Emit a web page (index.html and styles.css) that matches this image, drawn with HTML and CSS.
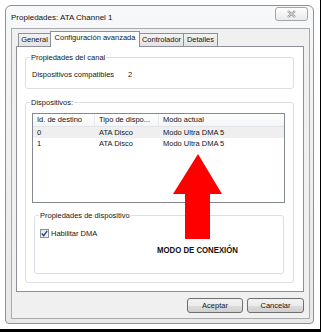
FILE: index.html
```html
<!DOCTYPE html>
<html lang="es">
  <head>
    <meta charset="UTF-8" />
    <meta name="viewport" content="width=device-width, initial-scale=1.0" />
    <title>Propiedades: ATA Channel 1</title>
    <link rel="stylesheet" href="styles.css">
  </head>
  <body>
    <div class="screen">
      <div class="window">
        <div class="titlebar">
          <span class="title">Propiedades: ATA Channel 1</span>
          <button class="close-btn">
            <svg width="9" height="8" viewBox="0 0 9 8">
              <path d="M1 1 L8 7 M8 1 L1 7" stroke="#8c8c8c" stroke-width="2.2" />
              <path d="M1 1 L8 7 M8 1 L1 7" stroke="#f4f4f4" stroke-width="0.8" />
            </svg>
          </button>
        </div>
        <div class="client">
          <div class="tabs">
            <div class="tab tab-general">General</div>
            <div class="tab tab-config active">Configuración avanzada</div>
            <div class="tab tab-ctrl">Controlador</div>
            <div class="tab tab-details">Detalles</div>
          </div>
          <div class="panel">
            <div class="group group-channel">
              <div class="group-title">Propiedades del canal</div>
              <div class="prop-row">
                <span class="prop-name">Dispositivos compatibles</span>
                <span>2</span>
              </div>
            </div>
            <div class="group group-devices">
              <div class="group-title">Dispositivos:</div>
              <div class="list">
                <div class="list-row list-head">
                  <span>Id. de destino</span>
                  <span>Tipo de dispo...</span>
                  <span>Modo actual</span>
                </div>
                <div class="list-row selected">
                  <span>0</span>
                  <span>ATA Disco</span>
                  <span>Modo Ultra DMA 5</span>
                </div>
                <div class="list-row">
                  <span>1</span>
                  <span>ATA Disco</span>
                  <span>Modo Ultra DMA 5</span>
                </div>
              </div>
              <div class="group group-device">
                <div class="group-title">Propiedades de dispositivo</div>
                <div class="check-row">
                  <span class="checkbox">
                    <svg width="7" height="7" viewBox="0 0 7 7">
                      <path d="M0.8 3.6 L2.7 5.6 L6.2 0.9" fill="none" stroke="#2c4277" stroke-width="1.4" />
                    </svg>
                  </span>
                  <span>Habilitar DMA</span>
                </div>
              </div>
            </div>
          </div>
          <div class="buttons">
            <button class="btn btn-ok">Aceptar</button>
            <button class="btn btn-cancel">Cancelar</button>
          </div>
        </div>
      </div>

      <!-- annotation drawn over the dialog -->
      <svg class="arrow" width="321" height="332" viewBox="0 0 321 332">
        <polygon points="198,154 222,194 210,194 210,239 185,239 185,194 173,194" fill="#ff0000" />
      </svg>
      <div class="note">MODO DE CONEXIÓN</div>
    </div>
  </body>
</html>
```

FILE: styles.css
```css
html,
body {
  margin: 0;
  background: #ffffff;
}

body {
  font-family: "Liberation Sans", Arial, sans-serif;
  font-size: 7.5px;
  color: #151515;
}

.screen {
  position: relative;
  box-sizing: border-box;
  width: 321px;
  height: 332px;
  padding: 5px 0 0 5px;
  border-right: 1px solid #000;
  border-bottom: 3px solid #000;
  overflow: hidden;
}

.window {
  box-sizing: border-box;
  width: 309px;
  height: 319px;
  padding: 0 3px 4px 5px;
  border: 1px solid #8f9193;
  border-radius: 6px 6px 4px 4px;
  background: linear-gradient(to bottom, #f7f8f9, #eceeef 60%, #e6e8ea);
  display: flex;
  flex-direction: column;
}

.titlebar {
  height: 22px;
  display: flex;
  align-items: center;
  justify-content: space-between;
}

.title {
  font-size: 8px;
  color: #111;
}

.close-btn {
  align-self: flex-start;
  box-sizing: border-box;
  width: 33px;
  height: 14px;
  margin: 1px 2px 0 0;
  padding: 0;
  border: 1px solid #a4a6a8;
  border-radius: 3px;
  background: linear-gradient(to bottom, #fdfdfd, #e9eaeb);
  display: flex;
  align-items: center;
  justify-content: center;
}

.client {
  box-sizing: border-box;
  width: 299px;
  height: 291px;
  padding: 2px 5px 5px 4px;
  border: 1px solid #a9abad;
  background: #f0f0f0;
}

.tabs {
  height: 15px;
  display: flex;
  align-items: flex-end;
  padding-left: 2px;
}

.tab {
  box-sizing: border-box;
  height: 13px;
  line-height: 12px;
  text-align: center;
  border: 1px solid #8d9099;
  border-bottom: none;
  background: linear-gradient(to bottom, #f3f3f3, #e3e3e3);
  white-space: nowrap;
}

.tab + .tab {
  margin-left: -1px;
}

.tab.active {
  position: relative;
  z-index: 1;
  height: 16px;
  line-height: 12px;
  margin-bottom: -1px;
  background: #ffffff;
}

.tab-general {
  width: 33px;
}

.tab-config {
  width: 90px;
}

.tab-ctrl {
  width: 45px;
}

.tab-details {
  width: 35px;
}

.panel {
  box-sizing: border-box;
  width: 288px;
  height: 246px;
  border: 1px solid #8d9099;
  background: #ffffff;
  overflow: hidden;
}

.group {
  box-sizing: border-box;
  border: 1px solid #d9dfe3;
  border-radius: 3px;
}

.group-title {
  width: fit-content;
  margin: -5px 0 0 4px;
  padding: 0 1px;
  line-height: 9px;
  background: #ffffff;
}

.group-channel {
  width: 269px;
  height: 32px;
  margin: 10px 0 0 8px;
}

.prop-row {
  display: flex;
  margin-top: 8px;
  padding-left: 6px;
  line-height: 9px;
}

.prop-name {
  width: 96px;
}

.group-devices {
  width: 269px;
  height: 181px;
  margin: 13px 0 0 8px;
}

.list {
  box-sizing: border-box;
  width: 253px;
  height: 90px;
  margin: 6px 0 0 6px;
  border: 1px solid #848991;
  background: #ffffff;
}

.list-row {
  display: grid;
  grid-template-columns: 62px 64px 1fr;
  height: 11px;
  line-height: 11px;
}

.list-row span {
  padding-left: 4px;
  white-space: nowrap;
}

.list-head {
  height: 13px;
  line-height: 12px;
  box-sizing: border-box;
  border-bottom: 1px solid #e2e4e7;
  background: linear-gradient(to bottom, #ffffff, #f4f5f7);
}

.list-head span {
  border-right: 1px solid #e8e9eb;
}

.list-head span:last-child {
  border-right: none;
}

.list-row.selected {
  background: #efefef;
}

.group-device {
  width: 250px;
  height: 59px;
  margin: 12px 0 0 8px;
}

.check-row {
  display: flex;
  align-items: center;
  gap: 2px;
  height: 10px;
  margin: 8px 0 0 5px;
}

.checkbox {
  box-sizing: border-box;
  width: 9px;
  height: 9px;
  border: 1px solid #8e8f8f;
  background: linear-gradient(135deg, #dfe6ee, #f7f9fb);
  display: flex;
  align-items: center;
  justify-content: center;
}

.buttons {
  display: flex;
  justify-content: flex-end;
  gap: 4px;
  margin-top: 6px;
}

.btn {
  box-sizing: border-box;
  height: 15px;
  padding: 0;
  border: 1px solid #707070;
  border-radius: 3px;
  background: linear-gradient(to bottom, #f2f2f2 0%, #ebebeb 50%, #dddddd 51%, #cfcfcf 100%);
  font-family: "Liberation Sans", Arial, sans-serif;
  font-size: 7.5px;
  color: #151515;
}

.btn-ok {
  width: 56px;
}

.btn-cancel {
  width: 57px;
}

.arrow {
  position: absolute;
  left: 0;
  top: 0;
  pointer-events: none;
}

.note {
  position: absolute;
  left: 157px;
  top: 244px;
  font-weight: bold;
  font-size: 9.5px;
  line-height: 11px;
  color: #111;
  white-space: nowrap;
  transform: scaleX(0.82);
  transform-origin: left center;
}
```
